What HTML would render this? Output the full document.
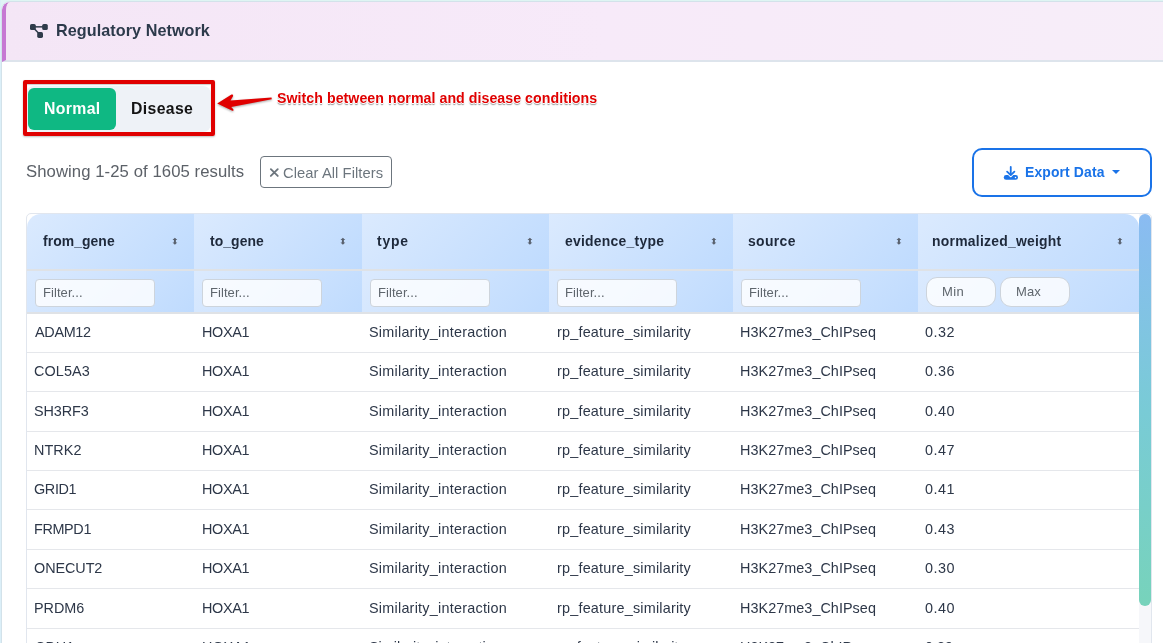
<!DOCTYPE html>
<html><head><meta charset="utf-8">
<style>
html,body{margin:0;padding:0;width:1163px;height:643px;overflow:hidden;background:#e0f3f6;font-family:"Liberation Sans",sans-serif;position:relative}
.a{position:absolute;white-space:nowrap;line-height:1;will-change:transform}
#bgt{position:absolute;left:0;top:0;width:1163px;height:1px;background:#def5f3}
#bgl{position:absolute;left:0;top:0;width:1px;height:643px;background:#dbeff8}
#card{position:absolute;left:1px;top:1px;width:1200px;height:700px;border:1px solid #d3e2ea;border-radius:9px;background:#fff;overflow:hidden}
#hdr{position:absolute;left:0;top:0;width:1200px;height:58px;background:linear-gradient(90deg,#f4e6f6 0%,#f7eaf9 50%,#f7eef9 100%);border-left:4px solid #c679d3;border-bottom:2px solid #dde4ec;box-sizing:content-box;border-top-left-radius:8px}
#title{left:55.5px;top:22.2px;font-size:16.2px;font-weight:bold;color:#2c3a4b}
#tog{position:absolute;left:26px;top:86px;width:185px;height:46px;background:#eef2f7;border-radius:8px}
#normal{position:absolute;left:28px;top:88px;width:88px;height:42px;background:#0fb883;border-radius:6px}
#redbox{position:absolute;left:23px;top:80px;width:184px;height:48px;border:4px solid #e00000;border-radius:2px;box-shadow:0 1px 2px rgba(0,0,0,.25), inset 0 1px 1px rgba(0,0,0,.2)}
.t-normal{left:43.5px;top:100.5px;font-size:15.8px;font-weight:bold;color:#fff}
.t-dis{left:131px;top:100.5px;font-size:15.8px;font-weight:bold;color:#141414}
#note{left:276.5px;top:90.8px;font-size:14.2px;font-weight:bold;color:#e00000;text-shadow:0 0 1px #fff,0 0 1px #fff,0 1.5px 1.5px rgba(0,0,0,.45)}
#showing{left:26px;top:162.8px;font-size:16.7px;color:#5c6168}
#clear{position:absolute;left:260px;top:156px;width:130px;height:30px;border:1px solid #6c757d;border-radius:4px}
#cleart{left:268.5px;top:165.2px;font-size:14.74px;color:#6c757d}
#export{position:absolute;left:972px;top:148px;width:176px;height:45px;border:2px solid #1a73e8;border-radius:10px}
#exportt{left:1025px;top:165.7px;font-size:13.93px;font-weight:bold;color:#1a73e8}
#tbl{position:absolute;left:26px;top:213px;width:1124px;height:460px;border:1px solid #e1e6ee;border-radius:5px;overflow:hidden;background:#fff}
.th{position:absolute;top:0;height:55px;border-bottom:2px solid #dfe2e6;background:linear-gradient(135deg,#dbeafe 0%,#bfdbfe 100%)}
.tf{position:absolute;top:57px;height:41px;border-bottom:2px solid #dfe2e6;background:linear-gradient(135deg,#dbeafe 0%,#bfdbfe 100%)}
.hl{font-size:13.93px;font-weight:bold;color:#1e293b}
.inp{position:absolute;height:26px;width:118px;border:1px solid #cdd4dc;border-radius:4px;background:rgba(255,255,255,.8)}
.ph{font-size:13px;color:#6c757d}
.mm{position:absolute;height:28px;width:68px;border:1px solid #cdd4dc;border-radius:11px;background:rgba(255,255,255,.8)}
.row{position:absolute;left:0;width:1112px;height:1px;background:#e5e7eb}
.c{font-size:14.4px;color:#2d3748}
#track{position:absolute;left:1112px;top:0;width:12px;height:460px;background:#f6f7fa}
#thumb{position:absolute;left:1112px;top:0px;width:12px;height:392px;border-radius:6px;background:linear-gradient(180deg,#8abbf2 0%,#79cbd6 50%,#77d3bb 100%)}
</style></head>
<body>
<div id="bgt"></div><div id="bgl"></div>
<div id="card">
  <div id="hdr"></div>
</div>
<!-- header icon -->
<svg class="a" style="left:26px;top:20px" width="26" height="20" viewBox="0 0 26 20">
  <rect x="4" y="4" width="5.8" height="6" rx="1.6" fill="#2f3b4a"/>
  <rect x="16.2" y="4" width="5.6" height="6" rx="1.6" fill="#2f3b4a"/>
  <rect x="11.2" y="12.1" width="5.8" height="5.8" rx="1.6" fill="#2f3b4a"/>
  <line x1="9" y1="6.85" x2="17" y2="6.85" stroke="#2f3b4a" stroke-width="1.5"/>
  <line x1="8.6" y1="9" x2="12.6" y2="13.2" stroke="#2f3b4a" stroke-width="1.5"/>
</svg>

<div id="tog"></div>
<div id="normal"></div>
<div id="redbox"></div>
<svg class="a" style="left:210px;top:88px;overflow:visible" width="70" height="28" viewBox="0 0 70 28">
  <path d="M7.2 15.6 L21.5 6.6 Q23.5 6 23 8.3 L20.5 12.5 L61.5 9.4 L61.8 11.3 L21.2 19 L23.3 21.3 Q24 23.4 21.8 22.6 Z" fill="#e00000" style="filter:drop-shadow(0 1px 1px rgba(0,0,0,.35))"/>
</svg>

<div id="clear"></div>
<svg class="a" style="left:268px;top:166px" width="13" height="13" viewBox="0 0 13 13"><path d="M2.85 3.15 L9.75 9.95 M9.75 3.15 L2.85 9.95" stroke="#6c757d" stroke-width="1.85" stroke-linecap="round"/></svg>
<div id="export"></div>
<svg class="a" style="left:998px;top:160px" width="26" height="24" viewBox="0 0 26 24">
  <rect x="5.8" y="15.1" width="14.2" height="4.7" rx="2.3" fill="#1a73e8"/>
  <polyline points="8.9,12.4 12.75,16.3 16.6,12.4" fill="none" stroke="#fff" stroke-width="1.9" stroke-linecap="round" stroke-linejoin="round"/>
  <line x1="12.75" y1="6.9" x2="12.75" y2="14.2" stroke="#1a73e8" stroke-width="1.8" stroke-linecap="round"/>
  <polyline points="9.1,11.6 12.75,15.1 16.4,11.6" fill="none" stroke="#1a73e8" stroke-width="1.8" stroke-linecap="round" stroke-linejoin="round"/>
  <circle cx="17.5" cy="17.4" r="0.75" fill="#fff"/>
</svg>
<svg class="a" style="left:1112px;top:170px" width="8" height="4" viewBox="0 0 8 4"><path d="M0 0 H8 L4 4 Z" fill="#1a73e8"/></svg>

<div id="tbl">
  <div class="th" style="left:0;width:167px;border-top-left-radius:14px"></div>
  <div class="th" style="left:167px;width:168px"></div>
  <div class="th" style="left:335px;width:187px"></div>
  <div class="th" style="left:522px;width:184px"></div>
  <div class="th" style="left:706px;width:185px"></div>
  <div class="th" style="left:891px;width:221px;border-top-right-radius:14px"></div>
  <div class="tf" style="left:0;width:167px"></div>
  <div class="tf" style="left:167px;width:168px"></div>
  <div class="tf" style="left:335px;width:187px"></div>
  <div class="tf" style="left:522px;width:184px"></div>
  <div class="tf" style="left:706px;width:185px"></div>
  <div class="tf" style="left:891px;width:221px"></div>
  <svg style="position:absolute;left:144px;top:23px" width="8" height="9" viewBox="0 0 8 9"><path d="M3.9 0.7 L6.3 3 H4.9 V5.5 H6.3 L3.9 7.8 L1.5 5.5 H2.9 V3 H1.5 Z" fill="#59616e"/></svg>
  <svg style="position:absolute;left:312px;top:23px" width="8" height="9" viewBox="0 0 8 9"><path d="M3.9 0.7 L6.3 3 H4.9 V5.5 H6.3 L3.9 7.8 L1.5 5.5 H2.9 V3 H1.5 Z" fill="#59616e"/></svg>
  <svg style="position:absolute;left:499px;top:23px" width="8" height="9" viewBox="0 0 8 9"><path d="M3.9 0.7 L6.3 3 H4.9 V5.5 H6.3 L3.9 7.8 L1.5 5.5 H2.9 V3 H1.5 Z" fill="#59616e"/></svg>
  <svg style="position:absolute;left:683px;top:23px" width="8" height="9" viewBox="0 0 8 9"><path d="M3.9 0.7 L6.3 3 H4.9 V5.5 H6.3 L3.9 7.8 L1.5 5.5 H2.9 V3 H1.5 Z" fill="#59616e"/></svg>
  <svg style="position:absolute;left:868px;top:23px" width="8" height="9" viewBox="0 0 8 9"><path d="M3.9 0.7 L6.3 3 H4.9 V5.5 H6.3 L3.9 7.8 L1.5 5.5 H2.9 V3 H1.5 Z" fill="#59616e"/></svg>
  <svg style="position:absolute;left:1089px;top:23px" width="8" height="9" viewBox="0 0 8 9"><path d="M3.9 0.7 L6.3 3 H4.9 V5.5 H6.3 L3.9 7.8 L1.5 5.5 H2.9 V3 H1.5 Z" fill="#59616e"/></svg>
  <div class="inp" style="left:8px;top:65px"></div>
  <div class="inp" style="left:175px;top:65px"></div>
  <div class="inp" style="left:343px;top:65px"></div>
  <div class="inp" style="left:530px;top:65px"></div>
  <div class="inp" style="left:714px;top:65px"></div>
  <div class="mm" style="left:899px;top:63px"></div>
  <div class="mm" style="left:973px;top:63px"></div>
  <div class="row" style="top:138px"></div>
  <div class="row" style="top:177px"></div>
  <div class="row" style="top:217px"></div>
  <div class="row" style="top:256px"></div>
  <div class="row" style="top:295px"></div>
  <div class="row" style="top:335px"></div>
  <div class="row" style="top:374px"></div>
  <div class="row" style="top:414px"></div>
  <div id="track"></div>
  <div id="thumb"></div>
</div>
<div class="a" style="left:56.24px;top:22.09px;font-size:16.2px;font-weight:bold;color:#2c3a4b;letter-spacing:0.054px;">Regulatory Network</div>
<div class="a" style="left:44.34px;top:100.53px;font-size:15.8px;font-weight:bold;color:#fff;letter-spacing:0.350px;">Normal</div>
<div class="a" style="left:130.54px;top:100.53px;font-size:15.8px;font-weight:bold;color:#141414;letter-spacing:0.360px;">Disease</div>
<div class="a" style="left:276.78px;top:90.78px;font-size:14.2px;font-weight:bold;color:#e00000;letter-spacing:0.039px;text-shadow:1px 0 0 #fff,-1px 0 0 #fff,0 -1px 0 #fff,0 1px 0 #fff,0 1.8px 1.2px rgba(0,0,0,.45)">Switch between normal and disease conditions</div>
<div class="a" style="left:25.78px;top:163.56px;font-size:16.7px;font-weight:normal;color:#5c6168;letter-spacing:0.074px;">Showing 1-25 of 1605 results</div>
<div class="a" style="left:283.12px;top:165.72px;font-size:14.74px;font-weight:normal;color:#6c757d;letter-spacing:0.065px;">Clear All Filters</div>
<div class="a" style="left:1025.00px;top:166.41px;font-size:13.93px;font-weight:bold;color:#1a73e8;letter-spacing:0.128px;">Export Data</div>
<div class="a" style="left:43.36px;top:235.01px;font-size:13.93px;font-weight:bold;color:#1e293b;letter-spacing:0.060px;">from_gene</div>
<div class="a" style="left:210.02px;top:235.01px;font-size:13.93px;font-weight:bold;color:#1e293b;letter-spacing:0.080px;">to_gene</div>
<div class="a" style="left:377.12px;top:235.01px;font-size:13.93px;font-weight:bold;color:#1e293b;letter-spacing:0.827px;">type</div>
<div class="a" style="left:565.46px;top:235.01px;font-size:13.93px;font-weight:bold;color:#1e293b;letter-spacing:0.253px;">evidence_type</div>
<div class="a" style="left:747.66px;top:235.01px;font-size:13.93px;font-weight:bold;color:#1e293b;letter-spacing:0.352px;">source</div>
<div class="a" style="left:932.32px;top:235.01px;font-size:13.93px;font-weight:bold;color:#1e293b;letter-spacing:0.245px;">normalized_weight</div>
<div class="a" style="left:43.10px;top:285.90px;font-size:13px;font-weight:normal;color:#5f666d;letter-spacing:0.070px;">Filter...</div>
<div class="a" style="left:210.10px;top:285.90px;font-size:13px;font-weight:normal;color:#5f666d;letter-spacing:0.070px;">Filter...</div>
<div class="a" style="left:378.10px;top:285.90px;font-size:13px;font-weight:normal;color:#5f666d;letter-spacing:0.070px;">Filter...</div>
<div class="a" style="left:565.10px;top:285.90px;font-size:13px;font-weight:normal;color:#5f666d;letter-spacing:0.070px;">Filter...</div>
<div class="a" style="left:749.10px;top:285.90px;font-size:13px;font-weight:normal;color:#5f666d;letter-spacing:0.070px;">Filter...</div>
<div class="a" style="left:941.78px;top:285.10px;font-size:13px;font-weight:normal;color:#5f666d;letter-spacing:0.360px;">Min</div>
<div class="a" style="left:1016.00px;top:285.10px;font-size:13px;font-weight:normal;color:#5f666d;letter-spacing:0.080px;">Max</div>
<div class="a" style="left:35.24px;top:324.61px;font-size:14.4px;font-weight:normal;color:#2d3748;letter-spacing:-0.304px;">ADAM12</div>
<div class="a" style="left:201.66px;top:324.61px;font-size:14.4px;font-weight:normal;color:#2d3748;letter-spacing:-0.350px;">HOXA1</div>
<div class="a" style="left:368.88px;top:324.61px;font-size:14.4px;font-weight:normal;color:#2d3748;letter-spacing:0.240px;">Similarity_interaction</div>
<div class="a" style="left:556.56px;top:324.61px;font-size:14.4px;font-weight:normal;color:#2d3748;letter-spacing:0.208px;">rp_feature_similarity</div>
<div class="a" style="left:739.88px;top:324.61px;font-size:14.4px;font-weight:normal;color:#2d3748;letter-spacing:0.048px;">H3K27me3_ChIPseq</div>
<div class="a" style="left:925.00px;top:324.61px;font-size:14.4px;font-weight:normal;color:#2d3748;letter-spacing:0.533px;">0.32</div>
<div class="a" style="left:34.44px;top:364.05px;font-size:14.4px;font-weight:normal;color:#2d3748;letter-spacing:0.112px;">COL5A3</div>
<div class="a" style="left:201.66px;top:364.05px;font-size:14.4px;font-weight:normal;color:#2d3748;letter-spacing:-0.350px;">HOXA1</div>
<div class="a" style="left:368.88px;top:364.05px;font-size:14.4px;font-weight:normal;color:#2d3748;letter-spacing:0.240px;">Similarity_interaction</div>
<div class="a" style="left:556.56px;top:364.05px;font-size:14.4px;font-weight:normal;color:#2d3748;letter-spacing:0.208px;">rp_feature_similarity</div>
<div class="a" style="left:739.88px;top:364.05px;font-size:14.4px;font-weight:normal;color:#2d3748;letter-spacing:0.048px;">H3K27me3_ChIPseq</div>
<div class="a" style="left:925.00px;top:364.05px;font-size:14.4px;font-weight:normal;color:#2d3748;letter-spacing:0.533px;">0.36</div>
<div class="a" style="left:34.44px;top:403.50px;font-size:14.4px;font-weight:normal;color:#2d3748;letter-spacing:-0.080px;">SH3RF3</div>
<div class="a" style="left:201.66px;top:403.50px;font-size:14.4px;font-weight:normal;color:#2d3748;letter-spacing:-0.350px;">HOXA1</div>
<div class="a" style="left:368.88px;top:403.50px;font-size:14.4px;font-weight:normal;color:#2d3748;letter-spacing:0.240px;">Similarity_interaction</div>
<div class="a" style="left:556.56px;top:403.50px;font-size:14.4px;font-weight:normal;color:#2d3748;letter-spacing:0.208px;">rp_feature_similarity</div>
<div class="a" style="left:739.88px;top:403.50px;font-size:14.4px;font-weight:normal;color:#2d3748;letter-spacing:0.048px;">H3K27me3_ChIPseq</div>
<div class="a" style="left:925.00px;top:403.50px;font-size:14.4px;font-weight:normal;color:#2d3748;letter-spacing:0.533px;">0.40</div>
<div class="a" style="left:34.44px;top:442.94px;font-size:14.4px;font-weight:normal;color:#2d3748;letter-spacing:0.060px;">NTRK2</div>
<div class="a" style="left:201.66px;top:442.94px;font-size:14.4px;font-weight:normal;color:#2d3748;letter-spacing:-0.350px;">HOXA1</div>
<div class="a" style="left:368.88px;top:442.94px;font-size:14.4px;font-weight:normal;color:#2d3748;letter-spacing:0.240px;">Similarity_interaction</div>
<div class="a" style="left:556.56px;top:442.94px;font-size:14.4px;font-weight:normal;color:#2d3748;letter-spacing:0.208px;">rp_feature_similarity</div>
<div class="a" style="left:739.88px;top:442.94px;font-size:14.4px;font-weight:normal;color:#2d3748;letter-spacing:0.048px;">H3K27me3_ChIPseq</div>
<div class="a" style="left:925.00px;top:442.94px;font-size:14.4px;font-weight:normal;color:#2d3748;letter-spacing:0.533px;">0.47</div>
<div class="a" style="left:34.44px;top:482.38px;font-size:14.4px;font-weight:normal;color:#2d3748;letter-spacing:-0.350px;">GRID1</div>
<div class="a" style="left:201.66px;top:482.38px;font-size:14.4px;font-weight:normal;color:#2d3748;letter-spacing:-0.350px;">HOXA1</div>
<div class="a" style="left:368.88px;top:482.38px;font-size:14.4px;font-weight:normal;color:#2d3748;letter-spacing:0.240px;">Similarity_interaction</div>
<div class="a" style="left:556.56px;top:482.38px;font-size:14.4px;font-weight:normal;color:#2d3748;letter-spacing:0.208px;">rp_feature_similarity</div>
<div class="a" style="left:739.88px;top:482.38px;font-size:14.4px;font-weight:normal;color:#2d3748;letter-spacing:0.048px;">H3K27me3_ChIPseq</div>
<div class="a" style="left:925.00px;top:482.38px;font-size:14.4px;font-weight:normal;color:#2d3748;letter-spacing:0.533px;">0.41</div>
<div class="a" style="left:34.44px;top:521.82px;font-size:14.4px;font-weight:normal;color:#2d3748;letter-spacing:-0.350px;">FRMPD1</div>
<div class="a" style="left:201.66px;top:521.82px;font-size:14.4px;font-weight:normal;color:#2d3748;letter-spacing:-0.350px;">HOXA1</div>
<div class="a" style="left:368.88px;top:521.82px;font-size:14.4px;font-weight:normal;color:#2d3748;letter-spacing:0.240px;">Similarity_interaction</div>
<div class="a" style="left:556.56px;top:521.82px;font-size:14.4px;font-weight:normal;color:#2d3748;letter-spacing:0.208px;">rp_feature_similarity</div>
<div class="a" style="left:739.88px;top:521.82px;font-size:14.4px;font-weight:normal;color:#2d3748;letter-spacing:0.048px;">H3K27me3_ChIPseq</div>
<div class="a" style="left:925.00px;top:521.82px;font-size:14.4px;font-weight:normal;color:#2d3748;letter-spacing:0.533px;">0.43</div>
<div class="a" style="left:34.44px;top:561.27px;font-size:14.4px;font-weight:normal;color:#2d3748;letter-spacing:-0.067px;">ONECUT2</div>
<div class="a" style="left:201.66px;top:561.27px;font-size:14.4px;font-weight:normal;color:#2d3748;letter-spacing:-0.350px;">HOXA1</div>
<div class="a" style="left:368.88px;top:561.27px;font-size:14.4px;font-weight:normal;color:#2d3748;letter-spacing:0.240px;">Similarity_interaction</div>
<div class="a" style="left:556.56px;top:561.27px;font-size:14.4px;font-weight:normal;color:#2d3748;letter-spacing:0.208px;">rp_feature_similarity</div>
<div class="a" style="left:739.88px;top:561.27px;font-size:14.4px;font-weight:normal;color:#2d3748;letter-spacing:0.048px;">H3K27me3_ChIPseq</div>
<div class="a" style="left:925.00px;top:561.27px;font-size:14.4px;font-weight:normal;color:#2d3748;letter-spacing:0.533px;">0.30</div>
<div class="a" style="left:34.44px;top:600.71px;font-size:14.4px;font-weight:normal;color:#2d3748;letter-spacing:-0.020px;">PRDM6</div>
<div class="a" style="left:201.66px;top:600.71px;font-size:14.4px;font-weight:normal;color:#2d3748;letter-spacing:-0.350px;">HOXA1</div>
<div class="a" style="left:368.88px;top:600.71px;font-size:14.4px;font-weight:normal;color:#2d3748;letter-spacing:0.240px;">Similarity_interaction</div>
<div class="a" style="left:556.56px;top:600.71px;font-size:14.4px;font-weight:normal;color:#2d3748;letter-spacing:0.208px;">rp_feature_similarity</div>
<div class="a" style="left:739.88px;top:600.71px;font-size:14.4px;font-weight:normal;color:#2d3748;letter-spacing:0.048px;">H3K27me3_ChIPseq</div>
<div class="a" style="left:925.00px;top:600.71px;font-size:14.4px;font-weight:normal;color:#2d3748;letter-spacing:0.533px;">0.40</div>
<div class="a" style="left:34.60px;top:640.15px;font-size:14.4px;font-weight:normal;color:#2d3748;letter-spacing:0.000px;">CDH1</div>
<div class="a" style="left:201.90px;top:640.15px;font-size:14.4px;font-weight:normal;color:#2d3748;letter-spacing:0.000px;">HOXA1</div>
<div class="a" style="left:369.20px;top:640.15px;font-size:14.4px;font-weight:normal;color:#2d3748;letter-spacing:0.000px;">Similarity_interaction</div>
<div class="a" style="left:556.40px;top:640.15px;font-size:14.4px;font-weight:normal;color:#2d3748;letter-spacing:0.000px;">rp_feature_similarity</div>
<div class="a" style="left:740.20px;top:640.15px;font-size:14.4px;font-weight:normal;color:#2d3748;letter-spacing:0.000px;">H3K27me3_ChIPseq</div>
<div class="a" style="left:925.00px;top:640.15px;font-size:14.4px;font-weight:normal;color:#2d3748;letter-spacing:0.000px;">0.39</div>
</body></html>
